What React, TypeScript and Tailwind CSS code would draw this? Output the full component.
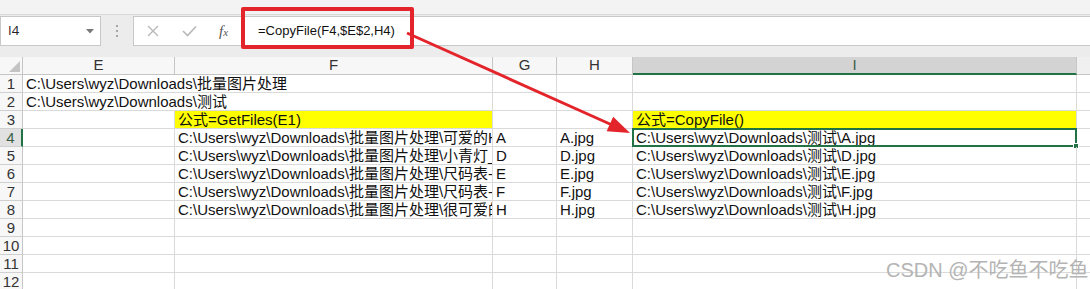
import React from "react";

const CELL_FONT = { fontFamily: '"Liberation Sans", "Noto Sans CJK SC", sans-serif' };

type Row = {
  n: number;
  e?: string;
  eSpan?: boolean;
  f?: string;
  fYellow?: boolean;
  g?: string;
  h?: string;
  i?: string;
  iYellow?: boolean;
};

const base = "C:\\Users\\wyz\\Downloads\\";

const rows: Row[] = [
  { n: 1, e: base + "批量图片处理", eSpan: true },
  { n: 2, e: base + "测试", eSpan: true },
  { n: 3, f: "公式=GetFiles(E1)", fYellow: true, i: "公式=CopyFile()", iYellow: true },
  { n: 4, f: base + "批量图片处理\\可爱的H小猫.jpg", g: "A", h: "A.jpg", i: base + "测试\\A.jpg" },
  { n: 5, f: base + "批量图片处理\\小青灯_D.jpg", g: "D", h: "D.jpg", i: base + "测试\\D.jpg" },
  { n: 6, f: base + "批量图片处理\\尺码表-E.jpg", g: "E", h: "E.jpg", i: base + "测试\\E.jpg" },
  { n: 7, f: base + "批量图片处理\\尺码表-F.jpg", g: "F", h: "F.jpg", i: base + "测试\\F.jpg" },
  { n: 8, f: base + "批量图片处理\\很可爱的H.jpg", g: "H", h: "H.jpg", i: base + "测试\\H.jpg" },
  { n: 9 },
  { n: 10 },
  { n: 11 },
  { n: 12 },
];

const cell =
  "border-r border-b border-[#dadada] overflow-hidden whitespace-nowrap pl-[3px] text-[15px] leading-[17px] text-[#111]";

function RowHeader({ n, selected }: { n: number; selected?: boolean }) {
  return (
    <div
      className={
        "border-b border-[#d0d0d0] flex items-center justify-center text-[15px] leading-[17px] " +
        (selected
          ? "bg-[#e1e1e1] border-r-2 border-r-[#217346] text-[#3a5f49]"
          : "bg-[#f7f7f7] border-r border-r-[#c6c6c6] text-[#333]")
      }
      style={CELL_FONT}
    >
      {n}
    </div>
  );
}

export default function App() {
  return (
    <div className="relative w-[1090px] h-[289px] overflow-hidden bg-white" style={CELL_FONT}>
      {/* top strip */}
      <div className="h-[15px] bg-[#f3f3f3] border-b border-[#d9d9d9]" />
      {/* formula bar */}
      <div className="h-[42px] bg-[#ececec] flex items-start pt-[1px]">
        <div className="w-[101px] h-[30px] bg-white border border-[#c8c8c8] flex items-center pl-[7px] pr-[6px]">
          <span className="text-[13px] text-[#222] flex-1" style={{ fontFamily: '"Open Sans", sans-serif' }}>
            I4
          </span>
          <svg width="8" height="5" viewBox="0 0 8 5">
            <path d="M0 0 L8 0 L4 4.5 Z" fill="#7a7a7a" />
          </svg>
        </div>
        <div className="w-[32px] h-[30px] flex flex-col items-center justify-center gap-[3px] pr-[1px]">
          <div className="w-[2px] h-[2px] bg-[#a6a6a6]" />
          <div className="w-[2px] h-[2px] bg-[#a6a6a6]" />
          <div className="w-[2px] h-[2px] bg-[#a6a6a6]" />
        </div>
        <div className="flex-1 h-[30px] bg-white border border-r-0 border-[#c8c8c8] flex items-center">
          <div className="w-[36px] flex justify-center ml-[1px]">
            <svg width="12" height="12" viewBox="0 0 12 12">
              <path d="M1 1 L11 11 M11 1 L1 11" stroke="#b8b8b8" strokeWidth="1.4" />
            </svg>
          </div>
          <div className="w-[36px] flex justify-center">
            <svg width="15" height="12" viewBox="0 0 15 12">
              <path d="M1 6 L5.5 10.5 L14 1.5" stroke="#b8b8b8" strokeWidth="1.6" fill="none" />
            </svg>
          </div>
          <div
            className="w-[36px] flex justify-center text-[15px] italic text-[#555] pr-[3px]"
            style={{ fontFamily: '"Liberation Serif", serif' }}
          >
            f<span className="text-[11px] mt-[4px]">x</span>
          </div>
          <div
            className="ml-[15px] text-[13px] text-[#111]"
            style={{ fontFamily: '"Liberation Sans", sans-serif' }}
          >
            =CopyFile(F4,$E$2,H4)
          </div>
        </div>
      </div>

      {/* sheet */}
      <div className="grid grid-cols-[23px_152px_318px_64px_76px_444px_1fr] auto-rows-[18px]">
        {/* header row */}
        <div className="relative bg-[#f7f7f7] border-r border-b border-[#c6c6c6]">
          <svg className="absolute right-[2px] bottom-[2px]" width="11" height="11" viewBox="0 0 11 11">
            <path d="M11 0 L11 11 L0 11 Z" fill="#c4c4c4" />
          </svg>
        </div>
        {["E", "F", "G", "H"].map((c) => (
          <div
            key={c}
            className="bg-[#f7f7f7] border-r border-b border-[#c6c6c6] flex items-center justify-center text-[15px] text-[#333]"
          >
            {c}
          </div>
        ))}
        <div className="bg-[#d3d3d3] border-r border-[#c6c6c6] border-b-2 border-b-[#217346] flex items-center justify-center text-[15px] text-[#3b5e48]">
          I
        </div>
        <div className="bg-[#f0f0f0] border-b border-[#c6c6c6]" />

        {rows.map((r) => (
          <React.Fragment key={r.n}>
            <RowHeader n={r.n} selected={r.n === 4} />
            {r.eSpan ? (
              <div className={cell + " col-span-2"}>{r.e}</div>
            ) : (
              <>
                <div className={cell}>{r.e}</div>
                <div className={cell + (r.fYellow ? " bg-[#ffff00]" : "")}>{r.f}</div>
              </>
            )}
            <div className={cell}>{r.g}</div>
            <div className={cell}>{r.h}</div>
            <div className={cell + " relative overflow-visible" + (r.iYellow ? " bg-[#ffff00]" : "")}>
              {r.i}
              {r.n === 4 && (
                <div className="absolute left-[-1px] top-[-1px] right-[-1px] bottom-[-1px] border-2 border-[#217346] pointer-events-none">
                  <div className="absolute right-[-4px] bottom-[-4px] w-[6px] h-[6px] bg-[#217346] border border-white" />
                </div>
              )}
            </div>
            <div className="border-b border-[#dadada]" />
          </React.Fragment>
        ))}
      </div>

      {/* red annotation box */}
      <div className="absolute left-[241px] top-[7px] w-[173px] h-[42px] border-[4px] border-[#e3242b] rounded-[2px] pointer-events-none" />

      {/* red arrow */}
      <svg className="absolute left-0 top-0 pointer-events-none" width="1090" height="289" viewBox="0 0 1090 289">
        <line x1="407" y1="33" x2="611" y2="124.5" stroke="#e3242b" strokeWidth="3" />
        <path d="M630 133 L606.6 131.3 L613.2 116.7 Z" fill="#e3242b" />
      </svg>

      {/* watermark */}
      <div
        className="absolute left-[886px] top-[258px] text-[20px] leading-[24px] text-[#b4b4b4] whitespace-nowrap"
        style={{ fontFamily: '"Liberation Sans", "Noto Sans CJK SC", sans-serif' }}
      >
        CSDN @不吃鱼不吃鱼
      </div>
    </div>
  );
}
